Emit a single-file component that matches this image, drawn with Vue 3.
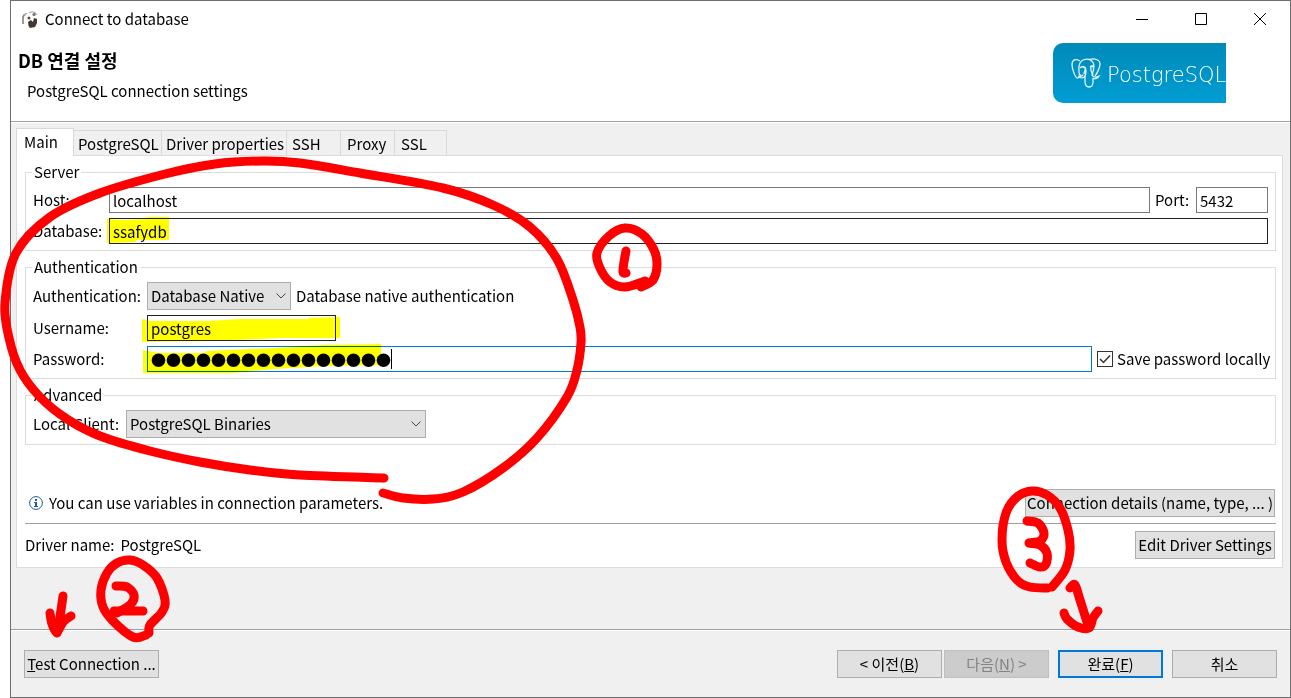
<script setup>
import { ref } from 'vue'

const tabs = [
  { id: 'main', label: 'Main' },
  { id: 'postgresql', label: 'PostgreSQL' },
  { id: 'props', label: 'Driver properties' },
  { id: 'ssh', label: 'SSH' },
  { id: 'proxy', label: 'Proxy' },
  { id: 'ssl', label: 'SSL' },
]
const active = ref('main')

const host = ref('localhost')
const port = ref('5432')
const database = ref('ssafydb')
const username = ref('postgres')
const password = ref('●'.repeat(16))
const savePassword = ref(true)

// Smooth curve through a list of points (Catmull-Rom turned into Béziers)
function curve(pts) {
  let d = `M${pts[0][0]} ${pts[0][1]}`
  for (let i = 0; i < pts.length - 1; i++) {
    const a = pts[i - 1] || pts[i]
    const b = pts[i]
    const c = pts[i + 1]
    const e = pts[i + 2] || c
    const x1 = b[0] + (c[0] - a[0]) / 6
    const y1 = b[1] + (c[1] - a[1]) / 6
    const x2 = c[0] - (e[0] - b[0]) / 6
    const y2 = c[1] - (e[1] - b[1]) / 6
    d += `C${x1} ${y1} ${x2} ${y2} ${c[0]} ${c[1]}`
  }
  return d
}

const strokes = [
  // large loop round the form
  [[384, 478], [300, 475], [250, 470], [200, 462], [150, 451], [100, 436], [67, 419], [40, 397], [20, 370], [9, 338], [5, 303], [16, 253], [50, 217], [100, 193], [165, 174], [215, 164], [262, 161], [300, 163], [360, 173], [443, 188], [493, 205], [530, 227], [557, 259], [573, 300], [580, 327], [581, 343], [577, 370], [567, 397], [537, 438], [503, 468], [463, 492], [433, 499], [403, 498], [383, 493]],
  // 1
  [[645, 281], [625, 287], [610, 282], [600, 268], [597, 253], [609, 236], [625, 228], [642, 234], [654, 250], [657, 265], [653, 280], [641, 287]],
  [[626, 251], [624, 262], [623, 272], [626, 273]],
  // 2
  [[146, 635], [133, 637], [113, 621], [103, 607], [101, 590], [107, 573], [117, 563], [130, 560], [143, 565], [157, 578], [165, 600], [162, 612], [150, 625], [149, 633]],
  [[116, 586], [127, 587], [134, 595], [131, 604], [117, 613]],
  [[114, 611], [143, 611]],
  [[63, 596], [61, 610], [59, 623], [57, 633]],
  [[50, 613], [52, 624], [57, 632], [63, 622], [71, 616]],
  // 3
  [[1048, 588], [1030, 587], [1017, 580], [1006, 562], [1002, 540], [1006, 513], [1017, 497], [1032, 491], [1047, 495], [1060, 508], [1068, 530], [1070, 550], [1065, 570], [1052, 587]],
  [[1027, 521], [1038, 523], [1044, 533], [1040, 541], [1029, 543], [1040, 545], [1047, 553], [1046, 564], [1040, 567], [1030, 563]],
  [[1070, 588], [1075, 585], [1080, 600], [1087, 622]],
  [[1064, 613], [1067, 619], [1078, 627], [1089, 628], [1093, 618], [1098, 611]],
].map(curve)

const highlights = [
  '107,219 123,220 147,219 147,217 169,217 169,240 136,240 136,242 107,243',
  '142,319 150,321 209,321 240,319 308,319 308,318 340,317 340,338 280,338 215,341 142,342',
  '143,350 158,353 205,353 206,351 275,348 325,345 381,344 381,365 325,366 275,369 233,373 143,373',
]
</script>

<template>
  <div class="stage">
    <main class="dialog">
      <header class="titlebar">
        <svg class="app-icon" width="18" height="18" viewBox="0 0 18 18">
          <path d="M2 14V8q0-3 3-4" fill="none" stroke="#8a7f7a" stroke-width="1.6" />
          <path d="M3 5l3-2M8 3q5-3 8 2" fill="none" stroke="#b5aeaa" stroke-width="1.2" />
          <circle cx="13" cy="4.500" r="1.600" fill="#7b706c" />
          <circle cx="8" cy="8" r="1.500" fill="#5b4f4b" />
          <path d="M7 12l3-2 2 2 1-4 3 1v4l-2 4-5 1q-2-2-2-6z" fill="#43352f" />
        </svg>
        <h1>Connect to database</h1>
        <div class="window-buttons">
          <button type="button" aria-label="Minimize">
            <svg width="12" height="12" viewBox="0 0 12 12"><path d="M0 6.500h12" /></svg>
          </button>
          <button type="button" aria-label="Maximize">
            <svg width="12" height="12" viewBox="0 0 12 12"><path d="M.5.5h11v11H.5z" /></svg>
          </button>
          <button type="button" aria-label="Close">
            <svg width="12" height="12" viewBox="0 0 12 12"><path d="M0 0l12 12M12 0L0 12" /></svg>
          </button>
        </div>
      </header>

      <section class="banner">
        <div class="banner-text">
          <h2>DB 연결 설정</h2>
          <p>PostgreSQL connection settings</p>
        </div>
        <div class="logo">
          <svg width="30" height="30" viewBox="0 0 30 30" fill="none" stroke="#e4f4fb" stroke-width="1.300">
            <path d="M9 3C5 0 1 2 1 6.500c0 4 3 12.500 5 13.500 1.500.5 3-2 4-3.500" />
            <path d="M8.500 17C7 9 8 4 12 2c4-1.500 8-.5 10 2.500 2 3 1 7-1 13" />
            <path d="M18 1.500c5-1.500 11 0 11 4.500 0 3-3 10-5 12" />
            <path d="M21 17c1 2 4 2.500 7 1-1 2.500-4 3-6 2.500v3c0 3-1 5.500-4 5.500s-4-2-4-6v-5c-2 3-5 2-6 .5 2 .5 4-1 4-2" />
            <path d="M9 10q3-3 5 0c1 2-1 4-1 6M19 9q2-2 4 0M14 18c2-4 1-6 0-9M20 9c-1 3 1 6 2 8" />
            <path d="M11.500 8.500l2 1M20.500 8l1.500 1" stroke-width="1.800" />
          </svg>
          <span>PostgreSQL</span>
        </div>
      </section>

      <div class="body">
        <div class="tabs" role="tablist">
          <button
            v-for="t in tabs"
            :key="t.id"
            type="button"
            role="tab"
            :class="['tab', 'tab-' + t.id, { active: active === t.id }]"
            :aria-selected="active === t.id"
            @click="active = t.id"
          >{{ t.label }}</button>
        </div>

        <section class="panel">
          <fieldset>
            <legend>Server</legend>
            <div class="row">
              <label class="w-server" for="host">Host:</label>
              <input id="host" v-model="host" class="grow" type="text" />
              <label class="port-label" for="port">Port:</label>
              <input id="port" v-model="port" class="port" type="text" />
            </div>
            <div class="row">
              <label class="w-server" for="database">Database:</label>
              <input id="database" v-model="database" class="grow dark" type="text" />
            </div>
          </fieldset>

          <fieldset>
            <legend>Authentication</legend>
            <div class="row">
              <label class="w-auth" for="auth">Authentication:</label>
              <div class="select auth-select">
                <select id="auth"><option>Database Native</option></select>
                <svg width="10" height="6" viewBox="0 0 10 6"><path d="M.5.5L5 5 9.500.5" /></svg>
              </div>
              <span class="hint">Database native authentication</span>
            </div>
            <div class="row">
              <label class="w-auth" for="username">Username:</label>
              <input id="username" v-model="username" class="username dark" type="text" />
            </div>
            <div class="row">
              <label class="w-auth" for="password">Password:</label>
              <input id="password" v-model="password" class="grow focused" type="text" autocomplete="off" />
              <label class="check">
                <span class="box">
                  <input v-model="savePassword" type="checkbox" />
                  <svg v-if="savePassword" width="16" height="16" viewBox="0 0 16 16"><path d="M3 8l3.500 3.500L13 4.500" /></svg>
                </span>
                Save password locally
              </label>
            </div>
          </fieldset>

          <fieldset>
            <legend>Advanced</legend>
            <div class="row">
              <label class="w-client" for="client">Local Client:</label>
              <div class="select client-select">
                <select id="client"><option>PostgreSQL Binaries</option></select>
                <svg width="10" height="6" viewBox="0 0 10 6"><path d="M.5.5L5 5 9.500.5" /></svg>
              </div>
            </div>
          </fieldset>

          <div class="info">
            <svg width="14" height="14" viewBox="0 0 14 14">
              <circle cx="7" cy="7" r="6.400" fill="#fff" stroke="#1d5c96" />
              <path d="M6 3h2v2H6zM5 6h3v4h1v1H5v-1h1V7H5z" fill="#1d5c96" />
            </svg>
            <span>You can use variables in connection parameters.</span>
            <button type="button" class="btn details">Connection details (name, type, ... )</button>
          </div>

          <div class="driver">
            <span>Driver name:</span>
            <span>PostgreSQL</span>
            <button type="button" class="btn edit">Edit Driver Settings</button>
          </div>
        </section>
      </div>

      <footer>
        <button type="button" class="btn test"><u>T</u>est Connection ...</button>
        <button type="button" class="btn nav">&lt; 이전(<u>B</u>)</button>
        <button type="button" class="btn nav" disabled>다음(<u>N</u>) &gt;</button>
        <button type="button" class="btn nav primary">완료(<u>F</u>)</button>
        <button type="button" class="btn nav">취소</button>
      </footer>
    </main>

    <svg class="ink marker" width="1291" height="698" viewBox="0 0 1291 698" aria-hidden="true">
      <polygon v-for="p in highlights" :key="p" :points="p" />
    </svg>
    <svg class="ink pen" width="1291" height="698" viewBox="0 0 1291 698" aria-hidden="true">
      <path class="caret" d="M391.500 349v20" />
      <path v-for="d in strokes" :key="d" :d="d" />
    </svg>
  </div>
</template>

<style>
body {
  background: #fff;
}
</style>

<style scoped>
* {
  box-sizing: border-box;
}

.stage {
  position: relative;
  padding-left: 10px;
  overflow: hidden;
  color: #000;
  font: 15px/20px "Noto Sans CJK KR", sans-serif;
}

input,
select,
button {
  font: inherit;
  color: inherit;
  margin: 0;
  border-radius: 0;
}

.dialog {
  display: flex;
  flex-direction: column;
  min-height: 100vh;
  border: 1px solid #6e6e6e;
  background: #f0f0f0;
}

.titlebar {
  display: flex;
  align-items: center;
  height: 36px;
  padding: 0 1px 0 10px;
  background: #fff;
}

h1 {
  margin: 0 0 0 6px;
  font-size: 15px;
  font-weight: 400;
}

.window-buttons {
  display: flex;
  margin-left: auto;
}

.window-buttons button {
  width: 59px;
  height: 36px;
  padding: 0;
  border: 0;
  background: none;
}

.window-buttons path {
  fill: none;
  stroke: #000;
}

.banner {
  display: flex;
  justify-content: space-between;
  height: 84px;
  padding: 6px 64px 0 7px;
  background: #fff;
}

h2 {
  margin: 5px 0 0;
  font-size: 18px;
  line-height: 24px;
  font-weight: 700;
}

.banner p {
  margin: 9px 0 0 9px;
}

.logo {
  display: flex;
  align-items: center;
  width: 173px;
  height: 60px;
  padding-left: 18px;
  overflow: hidden;
  border-radius: 10px 0 0 10px;
  background: linear-gradient(#008ab8, #009dd3);
  color: #fff;
  font: 200 21px/24px "DejaVu Sans", sans-serif;
}

.logo svg {
  flex: none;
}

.logo span {
  margin: 4px 0 0 6px;
  white-space: nowrap;
}

.body {
  padding: 6px 7px 61px 5px;
  border-top: 1px solid #a0a0a0;
  box-shadow: inset 0 1px #fff;
}

.tabs {
  display: flex;
  align-items: flex-end;
}

.tab {
  height: 25px;
  padding: 2px 0 0 5px;
  border: 1px solid #d9d9d9;
  border-width: 1px 1px 0 0;
  background: #f0f0f0;
  text-align: left;
  white-space: nowrap;
}

.tab.active {
  height: 28px;
  margin-bottom: -1px;
  padding-top: 0;
  padding-bottom: 2px;
  border-left-width: 1px;
  background: #fff;
  position: relative;
}

.tab-main { width: 58px; padding-left: 7px; }
.tab-postgresql { width: 88px; padding-left: 4px; }
.tab-props { width: 125px; padding-left: 4px; }
.tab-ssh { width: 54px; }
.tab-proxy { width: 54px; padding-left: 6px; }
.tab-ssl { width: 52px; padding-left: 6px; }

.panel {
  padding: 6px 6px 8px 8px;
  border: 1px solid #dcdcdc;
  background: #fff;
}

fieldset {
  min-width: 0;
  margin: 0 0 6px;
  padding: 5px 7px 6px 7px;
  border: 1px solid #dcdcdc;
}

legend {
  margin-left: -1px;
  padding: 0 2px;
}

.row {
  display: flex;
  align-items: center;
}

.row + .row {
  margin-top: 5px;
}

.row > label {
  flex: none;
  white-space: nowrap;
}

.w-server { width: 76px; }
.w-auth { width: 114px; }
.w-client { width: 93px; }

input[type="text"] {
  height: 26px;
  min-width: 0;
  padding: 0 3px;
  border: 1px solid #7a7a7a;
  background: #fff;
  outline: 0;
}

input.dark {
  border-color: #222;
}

input.focused {
  border-color: #0078d7;
}

.grow {
  flex: 1;
}

.port-label {
  width: 46px;
  padding-left: 5px;
}

.port {
  width: 72px;
}

.username {
  width: 189px;
}

.select {
  position: relative;
}

.select select {
  display: block;
  width: 100%;
  height: 28px;
  padding: 0 3px;
  border: 1px solid #adadad;
  background: #e1e1e1;
  appearance: none;
}

.select svg {
  position: absolute;
  right: 5px;
  top: 11px;
  fill: none;
  stroke: #444;
  pointer-events: none;
}

.auth-select { width: 144px; }
.client-select { width: 300px; }

.hint {
  margin-left: 5px;
}

.check {
  display: flex;
  align-items: center;
  gap: 4px;
  width: 176px;
  padding-left: 5px;
}

.box {
  position: relative;
  width: 16px;
  height: 16px;
}

.box input {
  display: block;
  width: 16px;
  height: 16px;
  border: 1px solid #333;
  background: #fff;
  appearance: none;
}

.box svg {
  position: absolute;
  inset: 0;
  fill: none;
  stroke: #333;
  stroke-width: 1.5;
  pointer-events: none;
}

.info {
  display: flex;
  align-items: center;
  margin-top: 44px;
  padding-left: 4px;
}

.info span {
  margin-left: 6px;
}

.btn {
  height: 28px;
  padding: 0;
  border: 1px solid #adadad;
  background: #e1e1e1;
  text-align: center;
  white-space: nowrap;
}

.details {
  width: 250px;
  margin: 0 1px 0 auto;
}

.driver {
  display: flex;
  align-items: center;
  gap: 6px;
  margin-top: 6px;
  padding-top: 7px;
  border-top: 1px solid #a0a0a0;
}

.edit {
  width: 140px;
  margin: 0 1px 0 auto;
}

footer {
  display: flex;
  flex: 1;
  align-items: flex-start;
  padding: 20px 13px 19px;
  border-top: 1px solid #a0a0a0;
  box-shadow: inset 0 1px #fff;
}

.test {
  width: 135px;
  margin-right: auto;
}

.nav {
  width: 105px;
  margin-left: 9px;
}

.nav:disabled {
  margin-left: 2px;
  border-color: #bfbfbf;
  background: #ccc;
  color: #838383;
}

.primary {
  border: 2px solid #0078d7;
}

.ink {
  position: absolute;
  left: 0;
  top: 0;
  pointer-events: none;
}

.marker {
  fill: #ff0;
  mix-blend-mode: multiply;
}

.pen path {
  fill: none;
  stroke: #f00;
  stroke-width: 9;
  stroke-linecap: round;
  stroke-linejoin: round;
}

.pen .caret {
  stroke: #000;
  stroke-width: 1;
  stroke-linecap: butt;
}
</style>
